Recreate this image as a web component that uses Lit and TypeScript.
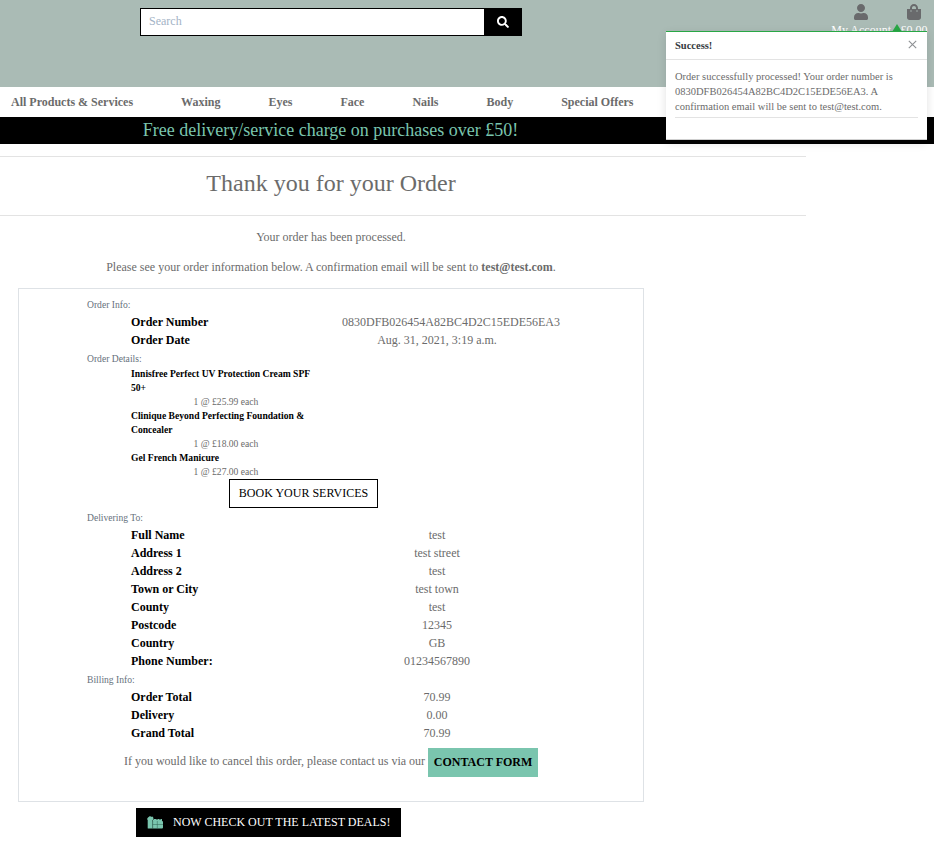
import { LitElement, html, css } from "lit";
import { customElement } from "lit/decorators.js";

type Row = [string, string];

const NAV = ["All Products & Services", "Waxing", "Eyes", "Face", "Nails", "Body", "Special Offers"];

const ORDER: Row[] = [
  ["Order Number", "0830DFB026454A82BC4D2C15EDE56EA3"],
  ["Order Date", "Aug. 31, 2021, 3:19 a.m."],
];

const ITEMS: Row[] = [
  ["Innisfree Perfect UV Protection Cream SPF 50+", "1 @ £25.99 each"],
  ["Clinique Beyond Perfecting Foundation & Concealer", "1 @ £18.00 each"],
  ["Gel French Manicure", "1 @ £27.00 each"],
];

const DELIVERY: Row[] = [
  ["Full Name", "test"],
  ["Address 1", "test street"],
  ["Address 2", "test"],
  ["Town or City", "test town"],
  ["County", "test"],
  ["Postcode", "12345"],
  ["Country", "GB"],
  ["Phone Number:", "01234567890"],
];

const BILLING: Row[] = [
  ["Order Total", "70.99"],
  ["Delivery", "0.00"],
  ["Grand Total", "70.99"],
];

@customElement("app-root")
export class AppRoot extends LitElement {
  static styles = css`
    :host {
      display: block;
      position: relative;
      height: 841px;
      overflow: hidden;
      background: #fff;
      color: #6b6b6b;
      font: 12px/18px "Liberation Serif", "Times New Roman", serif;
    }
    * { box-sizing: border-box; }
    p, h2, hr { margin: 0; }
    svg { display: block; fill: currentColor; }
    .header {
      display: flex;
      justify-content: space-between;
      height: 87px;
      padding: 0 6px 0 140px;
      background: #aabbb5;
    }
    .search {
      display: flex;
      width: 382px;
      height: 28px;
      margin-top: 8px;
      border: 1px solid #000;
      background: #fff;
    }
    .field { flex: 1; padding: 3px 8px; color: #a3b3c6; }
    .go {
      display: flex;
      align-items: center;
      justify-content: center;
      width: 37px;
      padding-bottom: 1px;
      background: #000;
      color: #fff;
    }
    .tools { display: flex; gap: 9px; padding-top: 4px; }
    .tool {
      display: flex;
      flex-direction: column;
      align-items: center;
      color: #696a6c;
    }
    .tool:last-child { width: 28px; }
    .tool span { color: #fff; line-height: 18px; margin-top: 1px; white-space: nowrap; }
    .nav {
      display: flex;
      gap: 48px;
      height: 30px;
      padding: 6px 11px;
      font-weight: bold;
      white-space: nowrap;
    }
    .banner {
      height: 27px;
      width: 100%;
      padding-right: 273px;
      background: #000;
      color: #7ac5ae;
      font-size: 18px;
      line-height: 27px;
      text-align: center;
    }
    .title {
      width: 806px;
      height: 60px;
      margin-top: 12px;
      padding-right: 144px;
      border-top: 1px solid #e3e3e3;
      border-bottom: 1px solid #e3e3e3;
      font-size: 24px;
      font-weight: normal;
      line-height: 53px;
      text-align: center;
    }
    .column { width: 662px; text-align: center; }
    .lead { padding-top: 12px; }
    .box {
      width: 626px;
      height: 514px;
      margin: 12px 18px 0;
      padding-top: 6px;
      border: 1px solid #dee2e6;
    }
    .group { height: 18px; padding: 1px 0 0 68px; color: #66717c; font-size: 9.6px; text-align: left; }
    .row { display: flex; padding-left: 112px; text-align: center; white-space: nowrap; }
    .key { width: 211px; color: #000; font-weight: bold; text-align: left; }
    .val { width: 190px; }
    .item { width: 190px; margin-left: 112px; font-size: 9.6px; line-height: 14px; }
    .item .name { color: #000; font-weight: bold; text-align: left; }
    .book {
      width: 149px;
      height: 29px;
      margin-left: 210px;
      border: 1px solid #000;
      color: #000;
      line-height: 27px;
    }
    .cancel { display: flex; justify-content: center; gap: 3px; margin-top: 6px; line-height: 27px; }
    .contact { width: 110px; height: 29px; background: #7ac5ae; color: #000; font-weight: bold; line-height: 29px; }
    .deals {
      display: flex;
      align-items: center;
      gap: 10px;
      width: 265px;
      height: 29px;
      margin: 6px 0 0 136px;
      padding: 0 0 1px 11px;
      background: #000;
      color: #fff;
      white-space: nowrap;
    }
    .deals svg { color: #7ac5ae; }
    .arrow {
      position: absolute;
      left: 892px;
      top: 24px;
      border: solid transparent;
      border-width: 0 5px 8px;
      border-bottom-color: #28a745;
    }
    .toast {
      position: absolute;
      left: 666px;
      top: 31px;
      width: 261px;
      height: 109px;
      border-top: 1px solid #28a745;
      border-bottom: 1px solid #cfcfcf;
      background: #fff;
      box-shadow: 0 3px 9px rgba(0, 0, 0, 0.12);
      font-size: 10.5px;
      line-height: 15px;
    }
    .toast-head {
      display: flex;
      justify-content: space-between;
      height: 28px;
      padding: 6px 10px 0 9px;
      border-bottom: 1px solid #e3e3e3;
      color: #343a40;
      font-weight: bold;
    }
    .toast-head svg { margin-top: 2px; color: #8e9194; }
    .toast-body { margin: 9px 9px 0; padding-bottom: 3px; border-bottom: 1px solid #e3e3e3; white-space: nowrap; }
  `;

  private row([key, value]: Row) {
    return html`<div class="row"><div class="key">${key}</div><div class="val">${value}</div></div>`;
  }

  render() {
    return html`
      <header class="header">
        <div class="search">
          <div class="field">Search</div>
          <div class="go">
            <svg width="12" height="12" viewBox="0 0 512 512"><path d="M505 442.700L405.300 343c-4.500-4.500-10.600-7-17-7H372c27.600-35.300 44-79.700 44-128C416 93.100 322.900 0 208 0S0 93.100 0 208s93.100 208 208 208c48.300 0 92.700-16.400 128-44v16.300c0 6.400 2.500 12.500 7 17l99.700 99.700c9.400 9.400 24.600 9.400 33.900 0l28.300-28.300c9.400-9.400 9.400-24.600.1-34zM208 336c-70.700 0-128-57.200-128-128 0-70.700 57.200-128 128-128 70.700 0 128 57.200 128 128 0 70.700-57.200 128-128 128z"/></svg>
          </div>
        </div>
        <div class="tools">
          <div class="tool">
            <svg width="14" height="16" viewBox="0 0 448 512"><path d="M224 256c70.700 0 128-57.300 128-128S294.700 0 224 0 96 57.300 96 128s57.300 128 128 128zm89.600 32h-16.700c-22.200 10.200-46.900 16-72.900 16s-50.600-5.800-72.900-16h-16.700C60.200 288 0 348.200 0 422.400V464c0 26.500 21.500 48 48 48h352c26.500 0 48-21.500 48-48v-41.600c0-74.200-60.200-134.400-134.400-134.400z"/></svg>
            <span>My Account</span>
          </div>
          <div class="tool">
            <svg width="14" height="16" viewBox="0 0 448 512"><path d="M352 160v-32C352 57.420 294.579 0 224 0 153.420 0 96 57.420 96 128v32H0v272c0 44.183 35.817 80 80 80h288c44.183 0 80-35.817 80-80V160h-96zm-192-32c0-35.290 28.710-64 64-64s64 28.710 64 64v32H160v-32zm160 120c-13.255 0-24-10.745-24-24s10.745-24 24-24 24 10.745 24 24-10.745 24-24 24zm-192 0c-13.255 0-24-10.745-24-24s10.745-24 24-24 24 10.745 24 24-10.745 24-24 24z"/></svg>
            <span>£0.00</span>
          </div>
        </div>
      </header>
      <nav class="nav">${NAV.map((n) => html`<span>${n}</span>`)}</nav>
      <div class="banner">Free delivery/service charge on purchases over £50!</div>
      <h2 class="title">Thank you for your Order</h2>
      <main class="column">
        <p class="lead">Your order has been processed.</p>
        <p class="lead">Please see your order information below. A confirmation email will be sent to <b>test@test.com</b>.</p>
        <section class="box">
          <div class="group">Order Info:</div>
          ${ORDER.map(this.row)}
          <div class="group">Order Details:</div>
          ${ITEMS.map(([name, qty]) => html`<div class="item"><div class="name">${name}</div><div>${qty}</div></div>`)}
          <div class="book">BOOK YOUR SERVICES</div>
          <div class="group">Delivering To:</div>
          ${DELIVERY.map(this.row)}
          <div class="group">Billing Info:</div>
          ${BILLING.map(this.row)}
          <div class="cancel">
            <span>If you would like to cancel this order, please contact us via our</span>
            <span class="contact">CONTACT FORM</span>
          </div>
        </section>
        <div class="deals">
          <svg width="16" height="13" viewBox="0 0 16 13"><path d="M1 1.500 2 .8 3 0l1 .8h2l.5 2L5.500 4.500V12.500H1.300Q.7 12.500.7 12V4L0 3Z"/><path d="M6 4 7 3h2l1 .8L11 3h1l1 .8L14 3h1v2q1 .2 1 1v5.500q0 1-1 1H5.500V6q0-1 .5-1Z"/><path d="M5.500 8.500H16M10.300 5v7.500M5.700 5v7.500" fill="none" stroke="#2f6353" stroke-width=".5"/></svg>
          <span>NOW CHECK OUT THE LATEST DEALS!</span>
        </div>
      </main>
      <div class="arrow"></div>
      <aside class="toast">
        <div class="toast-head">
          <span>Success!</span>
          <svg width="9" height="9" viewBox="0 0 9 9"><path d="M.8.8l7.400 7.400M8.200.8L.8 8.200" stroke="currentColor" stroke-width="1.100"/></svg>
        </div>
        <div class="toast-body">Order successfully processed! Your order number is<br />0830DFB026454A82BC4D2C15EDE56EA3. A<br />confirmation email will be sent to test@test.com.</div>
      </aside>
    `;
  }
}
